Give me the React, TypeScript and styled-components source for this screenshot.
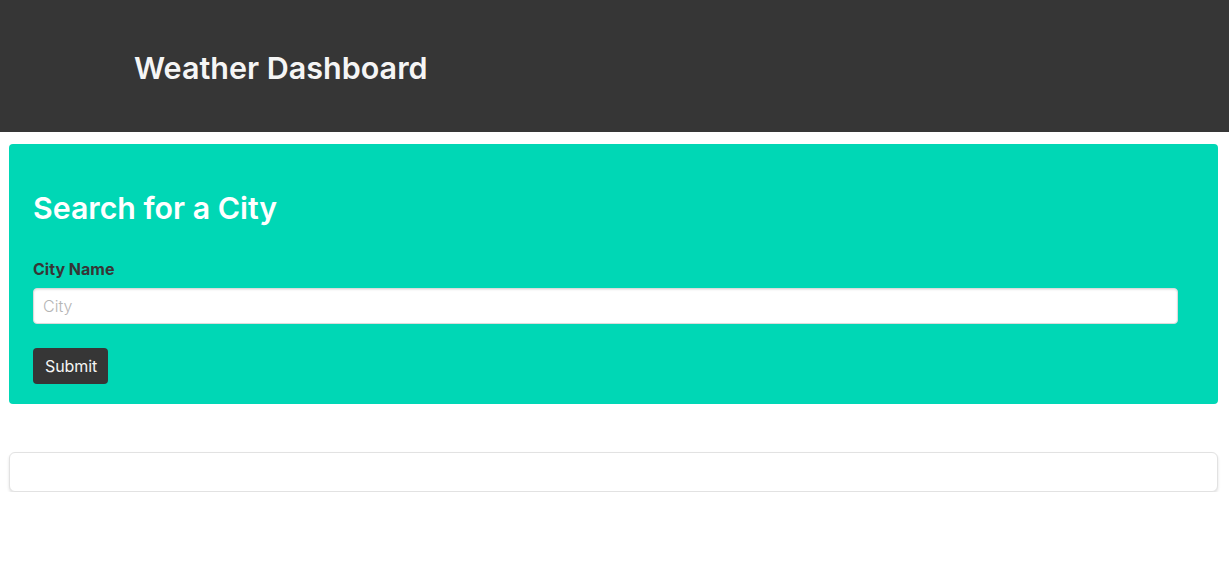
import React from "react";
import styled, { createGlobalStyle } from "styled-components";

const Global = createGlobalStyle`
  html, body { margin: 0; padding: 0; background: #fff; }
  body { font-family: Inter, "Noto Sans", sans-serif; color: #4a4a4a; }
  * { box-sizing: border-box; }
`;

const Hero = styled.header`
  background: #363636;
  height: 132px;
  display: flex;
  align-items: center;
  padding: 4px 0 0 134px;
`;

const HeroTitle = styled.h1`
  margin: 0;
  font-size: 30.5px;
  font-weight: 600;
  color: #f5f5f5;
  line-height: 1.125;
`;

const Main = styled.main`
  display: flex;
  flex-direction: column;
  gap: 48px;
  padding: 12px 11px 0 9px;
`;

const Notification = styled.section`
  background: #00d7b5;
  border-radius: 4px;
  padding: 47px 40px 20px 24px;
  display: flex;
  flex-direction: column;
`;

const Title = styled.h2`
  margin: 0 0 34px;
  font-size: 30.3px;
  font-weight: 600;
  color: #fff;
  line-height: 1.125;
`;

const Label = styled.label`
  font-size: 16px;
  font-weight: 700;
  color: #363636;
  margin-bottom: 9px;
`;

const Input = styled.input`
  height: 36px;
  border: 1px solid #dbdbdb;
  border-radius: 4px;
  padding: 0 9px;
  font-family: Inter, "Noto Sans", sans-serif;
  font-size: 16px;
  font-weight: 300;
  color: #363636;
  background: #fff;
  box-shadow: inset 0 1px 2px rgba(10, 10, 10, 0.1);
  margin-bottom: 24px;
  &::placeholder { color: #b5b5b5; }
`;

const Button = styled.button`
  align-self: flex-start;
  height: 36px;
  padding: 0 11px 0 12px;
  background: #363636;
  color: #f5f5f5;
  border: none;
  border-radius: 4px;
  font-family: Inter, "Noto Sans", sans-serif;
  font-size: 16px;
  font-weight: 400;
  letter-spacing: -0.1px;
`;

const Box = styled.section`
  height: 40px;
  border: 1px solid #e2e2e2;
  border-radius: 6px;
  background: #fff;
  box-shadow: 0 2px 3px rgba(10, 10, 10, 0.12);
`;

export default function App() {
  return (
    <>
      <Global />
      <Hero>
        <HeroTitle>Weather Dashboard</HeroTitle>
      </Hero>
      <Main>
        <Notification>
          <Title>Search for a City</Title>
          <Label htmlFor="city">City Name</Label>
          <Input id="city" placeholder="City" />
          <Button>Submit</Button>
        </Notification>
        <Box />
      </Main>
    </>
  );
}
